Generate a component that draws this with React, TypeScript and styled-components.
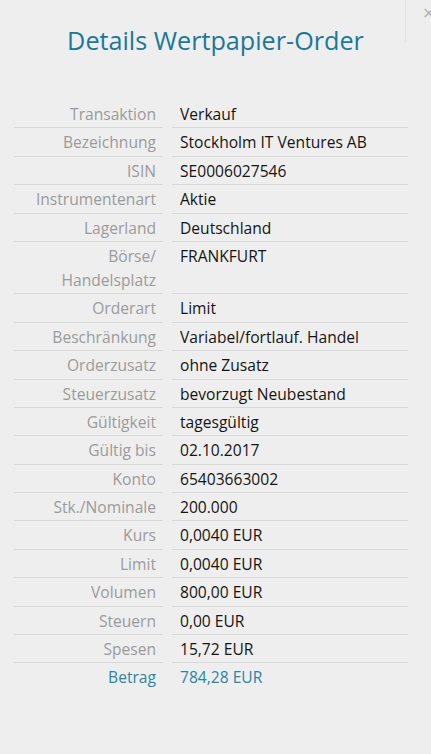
import React from "react";
import styled, { createGlobalStyle } from "styled-components";

const Global = createGlobalStyle`
  html, body { margin: 0; padding: 0; background: #eeeeee; }
  body { font-family: "Open Sans", "Noto Sans", sans-serif; }
`;

const Page = styled.div`
  position: relative;
  width: 431px;
  height: 754px;
  background: #eeeeee;
  overflow: hidden;
`;

const CloseArea = styled.div`
  position: absolute;
  top: 0;
  left: 405px;
  width: 40px;
  height: 42px;
  border-left: 1px solid #e2e2e2;
`;

const CloseX = styled.span`
  position: absolute;
  left: 16px;
  top: 3px;
  font-size: 16px;
  color: #b0b0b0;
  font-family: "DejaVu Sans", sans-serif;
`;

const Title = styled.h1`
  margin: 0;
  padding: 22px 0 0 0;
  text-align: center;
  font-weight: 400;
  font-size: 25.2px;
  line-height: 36px;
  color: #1a789b;
  letter-spacing: 0;
`;

const Table = styled.div`
  display: grid;
  grid-template-columns: 149px 236px;
  column-gap: 9px;
  margin: 42px 0 0 14px;
  font-size: 15.6px;
  line-height: 24px;
`;

const Label = styled.div<{ $accent?: boolean; $last?: boolean }>`
  text-align: right;
  padding: 2px 7px 1.4px 0;
  color: ${(p) => (p.$accent ? "#2a86a6" : "#9b9b9b")};
  border-bottom: 1px solid ${(p) => (p.$last ? "transparent" : "#d9d9d9")};
`;

const Value = styled.div<{ $accent?: boolean; $last?: boolean }>`
  padding: 2px 0 1.4px 8px;
  color: ${(p) => (p.$accent ? "#2a86a6" : "#151515")};
  border-bottom: 1px solid ${(p) => (p.$last ? "transparent" : "#d9d9d9")};
`;

const rows: [React.ReactNode, string][] = [
  ["Transaktion", "Verkauf"],
  ["Bezeichnung", "Stockholm IT Ventures AB"],
  ["ISIN", "SE0006027546"],
  ["Instrumentenart", "Aktie"],
  ["Lagerland", "Deutschland"],
  [<>Börse/<br />Handelsplatz</>, "FRANKFURT"],
  ["Orderart", "Limit"],
  ["Beschränkung", "Variabel/fortlauf. Handel"],
  ["Orderzusatz", "ohne Zusatz"],
  ["Steuerzusatz", "bevorzugt Neubestand"],
  ["Gültigkeit", "tagesgültig"],
  ["Gültig bis", "02.10.2017"],
  ["Konto", "65403663002"],
  ["Stk./Nominale", "200.000"],
  ["Kurs", "0,0040 EUR"],
  ["Limit", "0,0040 EUR"],
  ["Volumen", "800,00 EUR"],
  ["Steuern", "0,00 EUR"],
  ["Spesen", "15,72 EUR"],
  ["Betrag", "784,28 EUR"],
];

export default function App() {
  return (
    <Page>
      <Global />
      <CloseArea>
        <CloseX>×</CloseX>
      </CloseArea>
      <Title>Details Wertpapier-Order</Title>
      <Table>
        {rows.map(([l, v], i) => {
          const last = i === rows.length - 1;
          return (
            <React.Fragment key={i}>
              <Label $accent={last} $last={last}>{l}</Label>
              <Value $accent={last} $last={last}>{v}</Value>
            </React.Fragment>
          );
        })}
      </Table>
    </Page>
  );
}
